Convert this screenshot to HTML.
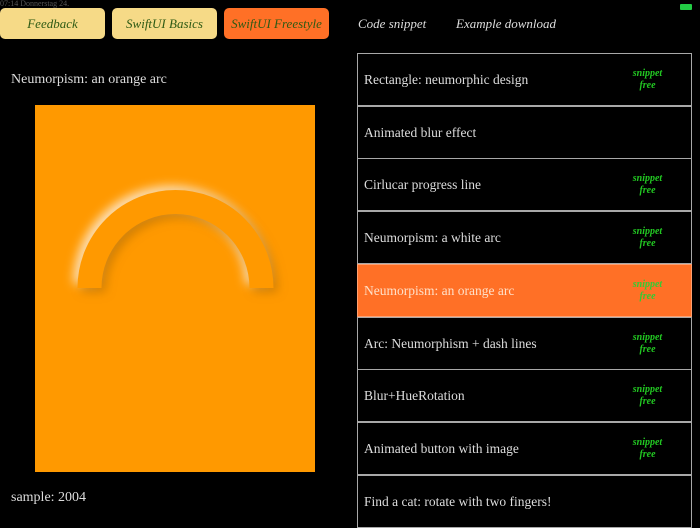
<!DOCTYPE html>
<html><head><meta charset="utf-8"><style>
body{margin:0;width:700px;height:525px;background:#000;position:relative;overflow:hidden;font-family:"Liberation Serif",serif;}
.btn{position:absolute;top:8px;height:31px;width:105px;border-radius:5px;background:#f6da87;color:#2e5a14;font-style:italic;font-size:13px;line-height:31px;text-align:center;}
.nav{position:absolute;top:16px;color:#ddd;font-style:italic;font-size:13px;}
.row{position:absolute;left:357px;width:333px;height:51px;border:1px solid #a8a8a8;color:#ddd;font-size:13.5px;}
.row span{position:absolute;left:6px;top:18px;}
.row i{position:absolute;left:262px;top:14px;width:55px;text-align:center;color:#22c822;font-size:10px;line-height:12px;font-weight:bold;}
</style></head><body>
<div style="position:absolute;left:0;top:0;font-size:8px;color:#555;line-height:8px">07:14 Donnerstag 24.</div>
<div style="position:absolute;left:680px;top:4px;width:12px;height:6px;background:#2c4;border-radius:1px"></div>
<div class="btn" style="left:0">Feedback</div>
<div class="btn" style="left:112px">SwiftUI Basics</div>
<div class="btn" style="left:224px;background:#ff7026">SwiftUI Freestyle</div>
<div class="nav" style="left:358px">Code snippet</div>
<div class="nav" style="left:456px">Example download</div>
<div style="position:absolute;left:11px;top:72px;color:#ddd;font-size:14px">Neumorpism: an orange arc</div>
<div style="position:absolute;left:35px;top:105px;width:280px;height:367px;background:#ff9900"></div>
<svg style="position:absolute;left:0;top:0" width="350" height="525">
<defs>
<filter id="d" x="-30%" y="-30%" width="160%" height="160%"><feGaussianBlur stdDeviation="5"/></filter>
</defs>
<path d="M89.5 288 A86 86 0 0 1 261.5 288" fill="none" stroke="#fff" stroke-opacity=".75" stroke-width="24" filter="url(#d)" transform="translate(-4,-4)"/>
<path d="M89.5 288 A86 86 0 0 1 261.5 288" fill="none" stroke="#a06000" stroke-opacity=".5" stroke-width="24" filter="url(#d)" transform="translate(4,4)"/>
<path d="M89.5 288 A86 86 0 0 1 261.5 288" fill="none" stroke="#ff9900" stroke-width="24"/>
</svg>
<div style="position:absolute;left:11px;top:490px;color:#ddd;font-size:14px">sample: 2004</div>
<div class="row" style="top:53px"><span>Rectangle: neumorphic design</span><i>snippet<br>free</i></div>
<div class="row" style="top:106px"><span>Animated blur effect</span></div>
<div class="row" style="top:158px"><span>Cirlucar progress line</span><i>snippet<br>free</i></div>
<div class="row" style="top:211px"><span>Neumorpism: a white arc</span><i>snippet<br>free</i></div>
<div class="row" style="top:264px;background:#ff7026;border-color:#ffa070"><span style="color:#ffe0c8">Neumorpism: an orange arc</span><i style="color:#3c3">snippet<br>free</i></div>
<div class="row" style="top:317px"><span>Arc: Neumorphism + dash lines</span><i>snippet<br>free</i></div>
<div class="row" style="top:369px"><span>Blur+HueRotation</span><i>snippet<br>free</i></div>
<div class="row" style="top:422px"><span>Animated button with image</span><i>snippet<br>free</i></div>
<div class="row" style="top:475px"><span>Find a cat: rotate with two fingers!</span></div>
</body></html>
